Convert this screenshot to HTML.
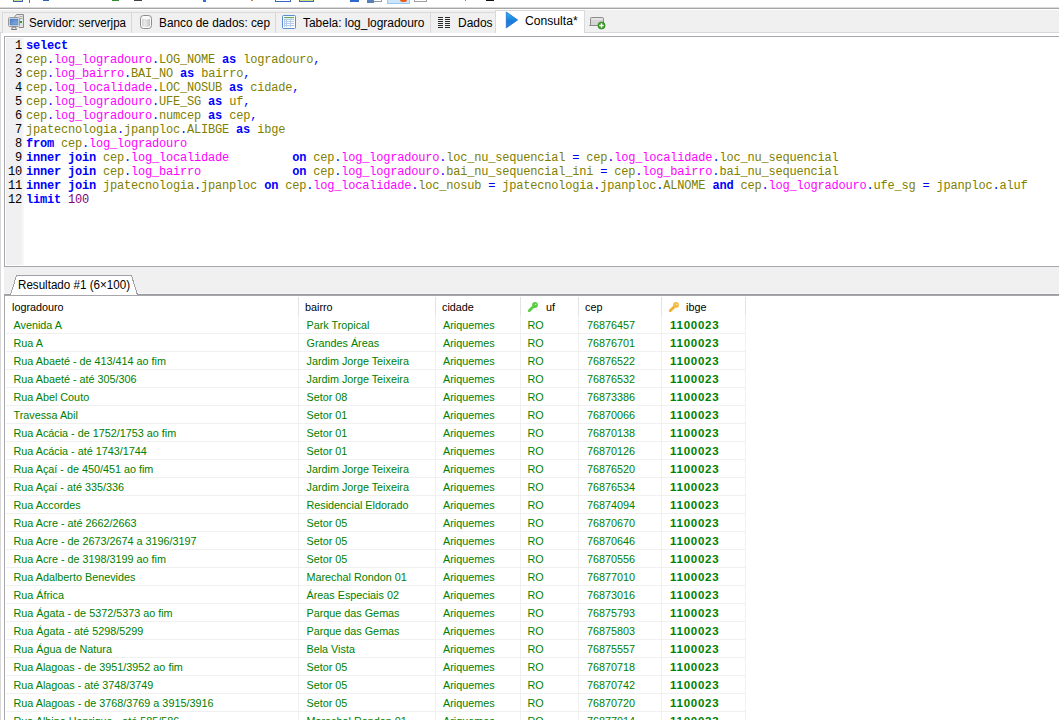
<!DOCTYPE html>
<html><head><meta charset="utf-8">
<style>
*{margin:0;padding:0;box-sizing:border-box}
html,body{width:1059px;height:720px;overflow:hidden;background:#fff;position:relative;font-family:"Liberation Sans",sans-serif}
.a{position:absolute}
#tb{left:0;top:0;width:1059px;height:7px;background:#fff}
#tbl7{left:0;top:7px;width:1059px;height:1px;background:#dadada}
#tbl9{left:0;top:9px;width:1059px;height:1px;background:#fff}
#tbline{left:0;top:8px;width:1059px;height:1px;background:#a5a5a5}
#tabs{left:0;top:10px;width:1059px;height:23px;background:#f0f0f0}
.tab{position:absolute;top:12px;height:21px;border-left:1px solid #d9d9d9;border-top:1px solid #dadada;background:#f0f0f0;font-size:11.5px;color:#000;white-space:nowrap}
.tt{position:absolute;font-size:12.5px;white-space:nowrap;transform-origin:0 0;color:#000}
#tabline{left:0;top:32px;width:1059px;height:1px;background:#d9d9d9}
#winl{left:0;top:33px;width:1px;height:687px;background:#d9d9d9}
#ed{left:4px;top:36px;width:1060px;height:231px;border:1px solid #a6a7ad;border-right:none;background:#fff}
#gut{left:6px;top:38px;width:16px;height:227px;background:#f0f0f0}
#gut2{left:22px;top:38px;width:2px;height:227px;background:#f7f7f7}
.code{position:absolute;left:26px;font-family:"Liberation Mono",monospace;font-size:12px;letter-spacing:-0.2px;line-height:14px;white-space:pre}
.ln{position:absolute;left:6px;width:16px;text-align:right;font-family:"Liberation Mono",monospace;font-size:12px;letter-spacing:-0.2px;line-height:14px;color:#000}
.k{color:#0000ff;font-weight:bold}
.d{color:#808000}
.t{color:#ff00ff}
.p{color:#0000ff}
.n{color:#800080}
#split{left:4px;top:267px;width:1055px;height:28px;background:#f0f0f0}
#grid{left:4px;top:294px;width:1060px;height:430px;border-left:1px solid #a9aab0;border-top:1px solid #9c9c9c;background:#fff}
#grid2{left:4px;top:295px;width:1060px;height:1px;background:#a6a7ad}
#l293{left:4px;top:293px;width:1055px;height:1px;background:#f5f5f5}
.hd{position:absolute;top:300px;font-size:10.8px;color:#000;white-space:nowrap;line-height:14px}
.c{position:absolute;font-size:10.8px;color:#008000;white-space:nowrap;line-height:14px}
.cb{font-weight:bold;font-size:11.5px;letter-spacing:0.75px}
.rs{position:absolute;left:6px;width:739px;height:1px;background:#f0f0f0}
.cs{position:absolute;width:1px;background:#f0f0f0}
.hs{position:absolute;top:297px;height:20px;width:1px;background:#e3e3e3}
</style></head><body>

<div class="a" id="tb"></div><div class="a" id="tbl7"></div><div class="a" id="tbline"></div><div class="a" id="tbl9"></div>
<div class="a" style="left:13px;top:0px;width:10px;height:2px;background:#cfe27a;border:1px solid #3b5fbf;border-top:none"></div>
<div class="a" style="left:29px;top:0px;width:1px;height:3px;background:#707070"></div>
<div class="a" style="left:43px;top:0px;width:6px;height:1px;background:#2f62b8"></div>
<div class="a" style="left:112px;top:0px;width:7px;height:1px;background:#2f8f2f"></div>
<div class="a" style="left:134px;top:0px;width:8px;height:1px;background:#404040"></div>
<div class="a" style="left:203px;top:0px;width:3px;height:2px;background:#2a6ee0"></div>
<div class="a" style="left:251px;top:0px;width:2px;height:1px;background:#d08030"></div>
<div class="a" style="left:275px;top:0px;width:16px;height:2px;background:#ffffff;border:1px solid #3b64c0;border-top:none"></div>
<div class="a" style="left:299px;top:0px;width:15px;height:2px;background:#cfe27a;border:1px solid #3b64c0;border-top:none"></div>
<div class="a" style="left:350px;top:0px;width:9px;height:2px;background:#2f68d0"></div>
<div class="a" style="left:367px;top:0px;width:15px;height:2px;background:#ffffff;border:1px solid #909aa8;border-top:none"></div>
<div class="a" style="left:367px;top:0px;width:7px;height:3px;background:#5b7fb8"></div>
<div class="a" style="left:387px;top:0px;width:23px;height:4px;background:#cce4f7;border:1px solid #99c8f0;border-top:none"></div>
<div class="a" style="left:414px;top:0px;width:13px;height:2px;background:#ffffff;border:1px solid #a0a0a0;border-top:none"></div>
<div class="a" style="left:465px;top:0px;width:1px;height:1px;background:#e05050"></div>
<div class="a" style="left:486px;top:0px;width:8px;height:1px;background:#111111"></div>
<div class="a" style="left:400px;top:-2px;width:7px;height:4px;border-radius:50%;background:#e8601c"></div>
<div class="a" id="tabs"></div>
<div class="a" id="tabline"></div>
<div class="tab" style="left:2px;width:129px"></div>
<div class="tab" style="left:131px;width:144px"></div>
<div class="tab" style="left:275px;width:155px"></div>
<div class="tab" style="left:430px;width:65px"></div>
<div class="a" style="left:495px;top:10px;width:90px;height:23px;background:#fff;border:1px solid #d9d9d9;border-bottom:none"></div>
<div class="tt" style="left:29.1px;top:16px;transform:scaleX(0.925)">Servidor: serverjpa</div>
<div class="tt" style="left:159.2px;top:16px;transform:scaleX(0.945)">Banco de dados: cep</div>
<div class="tt" style="left:302.6px;top:16px;transform:scaleX(0.955)">Tabela: log_logradouro</div>
<div class="tt" style="left:457.6px;top:16px;transform:scaleX(0.957)">Dados</div>
<div class="tt" style="left:524.5px;top:14px;transform:scaleX(0.972)">Consulta*</div>
<div class="a" style="left:0;top:33px;width:1059px;height:3px;background:#fff"></div>
<div class="a" id="winl"></div>

<svg class="a" style="left:0;top:0" width="620" height="34">
 <defs>
  <linearGradient id="scr" x1="0" y1="0" x2="1" y2="1"><stop offset="0" stop-color="#4f7fc6"/><stop offset="1" stop-color="#8ab0e0"/></linearGradient>
  <linearGradient id="dbg" x1="0" y1="0" x2="1" y2="0"><stop offset="0" stop-color="#cfcfcf"/><stop offset="0.35" stop-color="#ececec"/><stop offset="1" stop-color="#c4c4c4"/></linearGradient>
  <linearGradient id="tri" x1="0" y1="0" x2="0" y2="1"><stop offset="0" stop-color="#2ab8f4"/><stop offset="0.6" stop-color="#1a7ad8"/><stop offset="1" stop-color="#2a8ae0"/></linearGradient>
 </defs>
 <!-- server -->
 <path d="M14.5 17 L16.5 14.5 L23.5 14.5 L23.5 27.5 L19 27.5" fill="#e4e4e4" stroke="#8a8a8a" stroke-width="1"/>
 <rect x="19.5" y="16" width="3" height="1" fill="#b0b0b0"/>
 <rect x="19.5" y="18" width="3" height="1" fill="#a8a8a8"/>
 <rect x="20" y="21" width="2" height="2" fill="#2aa02a"/>
 <rect x="8.5" y="17.5" width="11" height="9" rx="1" fill="#f4f4f4" stroke="#9a9a9a" stroke-width="1"/>
 <rect x="10" y="19" width="8" height="6" fill="url(#scr)" stroke="#3f6fb8" stroke-width="0.6"/>
 <path d="M11.5 29.5 L12.5 27 L15.5 27 L16.5 29.5 Z" fill="#e8e8e8" stroke="#7a7a7a" stroke-width="1"/>
 <!-- db -->
 <rect x="140.5" y="15.5" width="11" height="13" rx="3" ry="3" fill="#fafafa" stroke="#8c8c8c" stroke-width="1"/>
 <path d="M142 19 Q146 21.5 150 19 L150 26 Q146 28 142 26 Z" fill="url(#dbg)"/>
 <path d="M142 19 Q146 21.5 150 19" fill="none" stroke="#d0d0d0" stroke-width="0.8"/>
 <!-- table -->
 <rect x="282.5" y="15.5" width="13" height="13" rx="1" fill="#fafcff" stroke="#5b8cd2" stroke-width="1"/>
 <rect x="284" y="17" width="10" height="1.2" fill="#63b05a"/>
 <g fill="#b4cbec">
  <rect x="284" y="19" width="10" height="1"/><rect x="284" y="21" width="10" height="1"/><rect x="284" y="23" width="10" height="1"/><rect x="284" y="25" width="10" height="1"/>
  <rect x="284" y="19" width="1" height="8"/><rect x="286" y="19" width="1" height="8"/><rect x="290" y="19" width="1" height="8"/>
 </g>
 <!-- dados -->
 <g fill="#2a2a2a">
  <rect x="438" y="17" width="5" height="1"/><rect x="445" y="17" width="5" height="1"/>
  <rect x="438" y="19" width="5" height="1"/><rect x="445" y="19" width="5" height="1"/>
  <rect x="438" y="21" width="5" height="1"/><rect x="445" y="21" width="5" height="1"/>
  <rect x="438" y="23" width="5" height="1"/><rect x="445" y="23" width="5" height="1"/>
  <rect x="438" y="25" width="5" height="1"/><rect x="445" y="25" width="5" height="1"/>
  <rect x="438" y="27" width="5" height="1"/><rect x="445" y="27" width="5" height="1"/>
 </g>
 <!-- play -->
 <path d="M506.3 12 L517.6 19.9 L506.3 27.9 Z" fill="url(#tri)" stroke="#1d6cd0" stroke-width="0.8"/>
 <!-- new tab -->
 <path d="M589.5 25.5 L590.5 25.5 L590.5 18.5 Q590.5 17.5 591.5 17.5 L602.5 17.5 Q603.5 17.5 603.5 18.5 L603.5 25.5 Z" fill="#d4d4d4" stroke="#8c8c8c" stroke-width="1"/>
 <rect x="591.5" y="18.5" width="11" height="1" fill="#f4f4ec"/>
 <circle cx="601.5" cy="25.5" r="3.6" fill="#3c9a2a" stroke="#2a7a1a" stroke-width="0.6"/>
 <path d="M601.5 23.3 V27.7 M599.3 25.5 H603.7" stroke="#fff" stroke-width="1.3"/>
</svg>

<div class="a" id="ed"></div><div class="a" id="gut"></div><div class="a" id="gut2"></div>
<div class="ln" style="top:39px">1</div>
<div class="code" style="top:39px"><b class="k">select</b></div>
<div class="ln" style="top:53px">2</div>
<div class="code" style="top:53px"><span class="d">cep</span><span class="p">.</span><span class="t">log_logradouro</span><span class="p">.</span><span class="d">LOG_NOME</span> <b class="k">as</b> <span class="d">logradouro</span><span class="p">,</span></div>
<div class="ln" style="top:67px">3</div>
<div class="code" style="top:67px"><span class="d">cep</span><span class="p">.</span><span class="t">log_bairro</span><span class="p">.</span><span class="d">BAI_NO</span> <b class="k">as</b> <span class="d">bairro</span><span class="p">,</span></div>
<div class="ln" style="top:81px">4</div>
<div class="code" style="top:81px"><span class="d">cep</span><span class="p">.</span><span class="t">log_localidade</span><span class="p">.</span><span class="d">LOC_NOSUB</span> <b class="k">as</b> <span class="d">cidade</span><span class="p">,</span></div>
<div class="ln" style="top:95px">5</div>
<div class="code" style="top:95px"><span class="d">cep</span><span class="p">.</span><span class="t">log_logradouro</span><span class="p">.</span><span class="d">UFE_SG</span> <b class="k">as</b> <span class="d">uf</span><span class="p">,</span></div>
<div class="ln" style="top:109px">6</div>
<div class="code" style="top:109px"><span class="d">cep</span><span class="p">.</span><span class="t">log_logradouro</span><span class="p">.</span><span class="d">numcep</span> <b class="k">as</b> <span class="d">cep</span><span class="p">,</span></div>
<div class="ln" style="top:123px">7</div>
<div class="code" style="top:123px"><span class="d">jpatecnologia</span><span class="p">.</span><span class="d">jpanploc</span><span class="p">.</span><span class="d">ALIBGE</span> <b class="k">as</b> <span class="d">ibge</span></div>
<div class="ln" style="top:137px">8</div>
<div class="code" style="top:137px"><b class="k">from</b> <span class="d">cep</span><span class="p">.</span><span class="t">log_logradouro</span></div>
<div class="ln" style="top:151px">9</div>
<div class="code" style="top:151px"><b class="k">inner</b> <b class="k">join</b> <span class="d">cep</span><span class="p">.</span><span class="t">log_localidade</span>         <b class="k">on</b> <span class="d">cep</span><span class="p">.</span><span class="t">log_logradouro</span><span class="p">.</span><span class="d">loc_nu_sequencial</span> <span class="p">=</span> <span class="d">cep</span><span class="p">.</span><span class="t">log_localidade</span><span class="p">.</span><span class="d">loc_nu_sequencial</span></div>
<div class="ln" style="top:165px">10</div>
<div class="code" style="top:165px"><b class="k">inner</b> <b class="k">join</b> <span class="d">cep</span><span class="p">.</span><span class="t">log_bairro</span>             <b class="k">on</b> <span class="d">cep</span><span class="p">.</span><span class="t">log_logradouro</span><span class="p">.</span><span class="d">bai_nu_sequencial_ini</span> <span class="p">=</span> <span class="d">cep</span><span class="p">.</span><span class="t">log_bairro</span><span class="p">.</span><span class="d">bai_nu_sequencial</span></div>
<div class="ln" style="top:179px">11</div>
<div class="code" style="top:179px"><b class="k">inner</b> <b class="k">join</b> <span class="d">jpatecnologia</span><span class="p">.</span><span class="d">jpanploc</span> <b class="k">on</b> <span class="d">cep</span><span class="p">.</span><span class="t">log_localidade</span><span class="p">.</span><span class="d">loc_nosub</span> <span class="p">=</span> <span class="d">jpatecnologia</span><span class="p">.</span><span class="d">jpanploc</span><span class="p">.</span><span class="d">ALNOME</span> <b class="k">and</b> <span class="d">cep</span><span class="p">.</span><span class="t">log_logradouro</span><span class="p">.</span><span class="d">ufe_sg</span> <span class="p">=</span> <span class="d">jpanploc</span><span class="p">.</span><span class="d">aluf</span></div>
<div class="ln" style="top:193px">12</div>
<div class="code" style="top:193px"><b class="k">limit</b> <span class="n">100</span></div>
<div class="a" id="split"></div><div class="a" id="l293"></div>
<svg class="a" style="left:0;top:270px" width="150" height="30" shape-rendering="crispEdges"><path d="M10.5 25 L16.5 5.5 L131.5 5.5 L137.5 25 Z" fill="#fff" stroke="#a0a0a8" stroke-width="1"/></svg>
<div class="a" id="grid"></div><div class="a" id="grid2"></div>
<div class="a" style="left:11px;top:294px;width:126px;height:1px;background:#fff"></div>
<div class="tt" style="left:17.6px;top:278px;transform:scaleX(0.929)">Resultado #1 (6×100)</div>
<div class="hd" style="left:12px">logradouro</div>
<div class="hd" style="left:305px">bairro</div>
<div class="hd" style="left:442px">cidade</div>
<div class="hd" style="left:546px">uf</div>
<div class="hd" style="left:585px">cep</div>
<div class="hd" style="left:686px">ibge</div>
<div class="hs" style="left:298px"></div>
<div class="hs" style="left:435px"></div>
<div class="hs" style="left:520px"></div>
<div class="hs" style="left:578px"></div>
<div class="hs" style="left:661px"></div>
<div class="hs" style="left:745px"></div>
<div class="cs" style="left:298px;top:315px;height:405px"></div>
<div class="cs" style="left:435px;top:315px;height:405px"></div>
<div class="cs" style="left:520px;top:315px;height:405px"></div>
<div class="cs" style="left:578px;top:315px;height:405px"></div>
<div class="cs" style="left:661px;top:315px;height:405px"></div>
<div class="cs" style="left:745px;top:315px;height:405px"></div>
<div class="c" style="left:13.5px;top:318px">Avenida A</div>
<div class="c" style="left:306.5px;top:318px">Park Tropical</div>
<div class="c" style="left:443px;top:318px">Ariquemes</div>
<div class="c" style="left:527.5px;top:318px">RO</div>
<div class="c" style="left:587px;top:318px">76876457</div>
<div class="c cb" style="left:670px;top:318px">1100023</div>
<div class="rs" style="top:333px"></div>
<div class="c" style="left:13.5px;top:336px">Rua A</div>
<div class="c" style="left:306.5px;top:336px">Grandes Áreas</div>
<div class="c" style="left:443px;top:336px">Ariquemes</div>
<div class="c" style="left:527.5px;top:336px">RO</div>
<div class="c" style="left:587px;top:336px">76876701</div>
<div class="c cb" style="left:670px;top:336px">1100023</div>
<div class="rs" style="top:351px"></div>
<div class="c" style="left:13.5px;top:354px">Rua Abaeté - de 413/414 ao fim</div>
<div class="c" style="left:306.5px;top:354px">Jardim Jorge Teixeira</div>
<div class="c" style="left:443px;top:354px">Ariquemes</div>
<div class="c" style="left:527.5px;top:354px">RO</div>
<div class="c" style="left:587px;top:354px">76876522</div>
<div class="c cb" style="left:670px;top:354px">1100023</div>
<div class="rs" style="top:369px"></div>
<div class="c" style="left:13.5px;top:372px">Rua Abaeté - até 305/306</div>
<div class="c" style="left:306.5px;top:372px">Jardim Jorge Teixeira</div>
<div class="c" style="left:443px;top:372px">Ariquemes</div>
<div class="c" style="left:527.5px;top:372px">RO</div>
<div class="c" style="left:587px;top:372px">76876532</div>
<div class="c cb" style="left:670px;top:372px">1100023</div>
<div class="rs" style="top:387px"></div>
<div class="c" style="left:13.5px;top:390px">Rua Abel Couto</div>
<div class="c" style="left:306.5px;top:390px">Setor 08</div>
<div class="c" style="left:443px;top:390px">Ariquemes</div>
<div class="c" style="left:527.5px;top:390px">RO</div>
<div class="c" style="left:587px;top:390px">76873386</div>
<div class="c cb" style="left:670px;top:390px">1100023</div>
<div class="rs" style="top:405px"></div>
<div class="c" style="left:13.5px;top:408px">Travessa Abil</div>
<div class="c" style="left:306.5px;top:408px">Setor 01</div>
<div class="c" style="left:443px;top:408px">Ariquemes</div>
<div class="c" style="left:527.5px;top:408px">RO</div>
<div class="c" style="left:587px;top:408px">76870066</div>
<div class="c cb" style="left:670px;top:408px">1100023</div>
<div class="rs" style="top:423px"></div>
<div class="c" style="left:13.5px;top:426px">Rua Acácia - de 1752/1753 ao fim</div>
<div class="c" style="left:306.5px;top:426px">Setor 01</div>
<div class="c" style="left:443px;top:426px">Ariquemes</div>
<div class="c" style="left:527.5px;top:426px">RO</div>
<div class="c" style="left:587px;top:426px">76870138</div>
<div class="c cb" style="left:670px;top:426px">1100023</div>
<div class="rs" style="top:441px"></div>
<div class="c" style="left:13.5px;top:444px">Rua Acácia - até 1743/1744</div>
<div class="c" style="left:306.5px;top:444px">Setor 01</div>
<div class="c" style="left:443px;top:444px">Ariquemes</div>
<div class="c" style="left:527.5px;top:444px">RO</div>
<div class="c" style="left:587px;top:444px">76870126</div>
<div class="c cb" style="left:670px;top:444px">1100023</div>
<div class="rs" style="top:459px"></div>
<div class="c" style="left:13.5px;top:462px">Rua Açaí - de 450/451 ao fim</div>
<div class="c" style="left:306.5px;top:462px">Jardim Jorge Teixeira</div>
<div class="c" style="left:443px;top:462px">Ariquemes</div>
<div class="c" style="left:527.5px;top:462px">RO</div>
<div class="c" style="left:587px;top:462px">76876520</div>
<div class="c cb" style="left:670px;top:462px">1100023</div>
<div class="rs" style="top:477px"></div>
<div class="c" style="left:13.5px;top:480px">Rua Açaí - até 335/336</div>
<div class="c" style="left:306.5px;top:480px">Jardim Jorge Teixeira</div>
<div class="c" style="left:443px;top:480px">Ariquemes</div>
<div class="c" style="left:527.5px;top:480px">RO</div>
<div class="c" style="left:587px;top:480px">76876534</div>
<div class="c cb" style="left:670px;top:480px">1100023</div>
<div class="rs" style="top:495px"></div>
<div class="c" style="left:13.5px;top:498px">Rua Accordes</div>
<div class="c" style="left:306.5px;top:498px">Residencial Eldorado</div>
<div class="c" style="left:443px;top:498px">Ariquemes</div>
<div class="c" style="left:527.5px;top:498px">RO</div>
<div class="c" style="left:587px;top:498px">76874094</div>
<div class="c cb" style="left:670px;top:498px">1100023</div>
<div class="rs" style="top:513px"></div>
<div class="c" style="left:13.5px;top:516px">Rua Acre - até 2662/2663</div>
<div class="c" style="left:306.5px;top:516px">Setor 05</div>
<div class="c" style="left:443px;top:516px">Ariquemes</div>
<div class="c" style="left:527.5px;top:516px">RO</div>
<div class="c" style="left:587px;top:516px">76870670</div>
<div class="c cb" style="left:670px;top:516px">1100023</div>
<div class="rs" style="top:531px"></div>
<div class="c" style="left:13.5px;top:534px">Rua Acre - de 2673/2674 a 3196/3197</div>
<div class="c" style="left:306.5px;top:534px">Setor 05</div>
<div class="c" style="left:443px;top:534px">Ariquemes</div>
<div class="c" style="left:527.5px;top:534px">RO</div>
<div class="c" style="left:587px;top:534px">76870646</div>
<div class="c cb" style="left:670px;top:534px">1100023</div>
<div class="rs" style="top:549px"></div>
<div class="c" style="left:13.5px;top:552px">Rua Acre - de 3198/3199 ao fim</div>
<div class="c" style="left:306.5px;top:552px">Setor 05</div>
<div class="c" style="left:443px;top:552px">Ariquemes</div>
<div class="c" style="left:527.5px;top:552px">RO</div>
<div class="c" style="left:587px;top:552px">76870556</div>
<div class="c cb" style="left:670px;top:552px">1100023</div>
<div class="rs" style="top:567px"></div>
<div class="c" style="left:13.5px;top:570px">Rua Adalberto Benevides</div>
<div class="c" style="left:306.5px;top:570px">Marechal Rondon 01</div>
<div class="c" style="left:443px;top:570px">Ariquemes</div>
<div class="c" style="left:527.5px;top:570px">RO</div>
<div class="c" style="left:587px;top:570px">76877010</div>
<div class="c cb" style="left:670px;top:570px">1100023</div>
<div class="rs" style="top:585px"></div>
<div class="c" style="left:13.5px;top:588px">Rua África</div>
<div class="c" style="left:306.5px;top:588px">Áreas Especiais 02</div>
<div class="c" style="left:443px;top:588px">Ariquemes</div>
<div class="c" style="left:527.5px;top:588px">RO</div>
<div class="c" style="left:587px;top:588px">76873016</div>
<div class="c cb" style="left:670px;top:588px">1100023</div>
<div class="rs" style="top:603px"></div>
<div class="c" style="left:13.5px;top:606px">Rua Ágata - de 5372/5373 ao fim</div>
<div class="c" style="left:306.5px;top:606px">Parque das Gemas</div>
<div class="c" style="left:443px;top:606px">Ariquemes</div>
<div class="c" style="left:527.5px;top:606px">RO</div>
<div class="c" style="left:587px;top:606px">76875793</div>
<div class="c cb" style="left:670px;top:606px">1100023</div>
<div class="rs" style="top:621px"></div>
<div class="c" style="left:13.5px;top:624px">Rua Ágata - até 5298/5299</div>
<div class="c" style="left:306.5px;top:624px">Parque das Gemas</div>
<div class="c" style="left:443px;top:624px">Ariquemes</div>
<div class="c" style="left:527.5px;top:624px">RO</div>
<div class="c" style="left:587px;top:624px">76875803</div>
<div class="c cb" style="left:670px;top:624px">1100023</div>
<div class="rs" style="top:639px"></div>
<div class="c" style="left:13.5px;top:642px">Rua Água de Natura</div>
<div class="c" style="left:306.5px;top:642px">Bela Vista</div>
<div class="c" style="left:443px;top:642px">Ariquemes</div>
<div class="c" style="left:527.5px;top:642px">RO</div>
<div class="c" style="left:587px;top:642px">76875557</div>
<div class="c cb" style="left:670px;top:642px">1100023</div>
<div class="rs" style="top:657px"></div>
<div class="c" style="left:13.5px;top:660px">Rua Alagoas - de 3951/3952 ao fim</div>
<div class="c" style="left:306.5px;top:660px">Setor 05</div>
<div class="c" style="left:443px;top:660px">Ariquemes</div>
<div class="c" style="left:527.5px;top:660px">RO</div>
<div class="c" style="left:587px;top:660px">76870718</div>
<div class="c cb" style="left:670px;top:660px">1100023</div>
<div class="rs" style="top:675px"></div>
<div class="c" style="left:13.5px;top:678px">Rua Alagoas - até 3748/3749</div>
<div class="c" style="left:306.5px;top:678px">Setor 05</div>
<div class="c" style="left:443px;top:678px">Ariquemes</div>
<div class="c" style="left:527.5px;top:678px">RO</div>
<div class="c" style="left:587px;top:678px">76870742</div>
<div class="c cb" style="left:670px;top:678px">1100023</div>
<div class="rs" style="top:693px"></div>
<div class="c" style="left:13.5px;top:696px">Rua Alagoas - de 3768/3769 a 3915/3916</div>
<div class="c" style="left:306.5px;top:696px">Setor 05</div>
<div class="c" style="left:443px;top:696px">Ariquemes</div>
<div class="c" style="left:527.5px;top:696px">RO</div>
<div class="c" style="left:587px;top:696px">76870720</div>
<div class="c cb" style="left:670px;top:696px">1100023</div>
<div class="rs" style="top:711px"></div>
<div class="c" style="left:13.5px;top:714px">Rua Albino Henrique - até 585/586</div>
<div class="c" style="left:306.5px;top:714px">Marechal Rondon 01</div>
<div class="c" style="left:443px;top:714px">Ariquemes</div>
<div class="c" style="left:527.5px;top:714px">RO</div>
<div class="c" style="left:587px;top:714px">76877014</div>
<div class="c cb" style="left:670px;top:714px">1100023</div>
<div class="rs" style="top:729px"></div>

<svg class="a" style="left:520px;top:296px" width="170" height="20">
 <g transform="translate(8,6)">
  <path d="M1.2 8.8 L5 5" stroke="#5ccc44" stroke-width="2.8" stroke-linecap="round"/>
  <circle cx="7" cy="3" r="2.9" fill="#5ccc44"/>
  <circle cx="7.6" cy="2.4" r="0.7" fill="#c8f0b8"/>
 </g>
 <g transform="translate(149,6)">
  <path d="M1.2 8.8 L5 5" stroke="#f0b030" stroke-width="2.8" stroke-linecap="round"/>
  <circle cx="7" cy="3" r="2.9" fill="#f4bc40"/>
  <circle cx="7.6" cy="2.4" r="0.7" fill="#fde8b0"/>
 </g>
</svg>

</body></html>
